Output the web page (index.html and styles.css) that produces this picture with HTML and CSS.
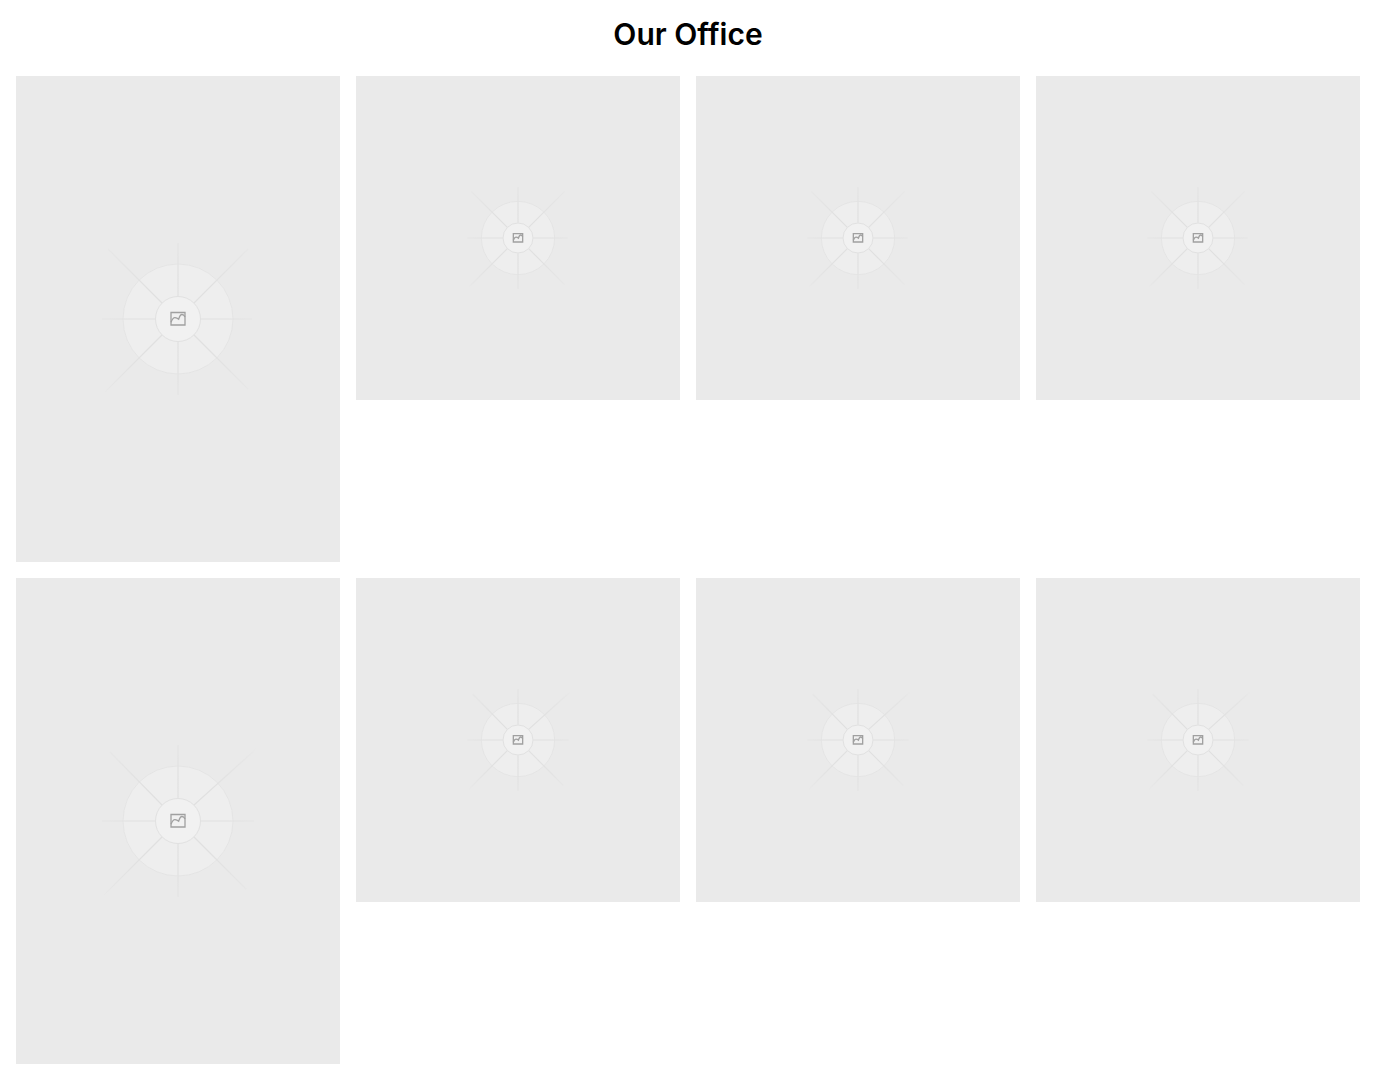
FILE: index.html
```html
<!DOCTYPE html>
<html lang="en">
<head>
<meta charset="utf-8">
<title>Our Office</title>
<link rel="stylesheet" href="styles.css">
</head>
<body>
<svg class="defs" width="0" height="0" aria-hidden="true">
  <defs>
    <radialGradient id="ray" gradientUnits="userSpaceOnUse" cx="90" cy="90" r="108">
      <stop offset="0.4" stop-color="#e0e0e0"/>
      <stop offset="0.6" stop-color="#e2e2e2"/>
      <stop offset="0.88" stop-color="#e6e6e6"/>
      <stop offset="1" stop-color="#eaeaea"/>
    </radialGradient>
    <symbol id="ph-a" viewBox="0 0 180 180">
      <circle class="outer" cx="90" cy="90" r="55"/>
      <g class="rays">
        <path d="M90 14V67M90 113V166M14 90H67M113 90H164"/>
        <path d="M20 20L74 74M160 20L106 74M106 106L160 160M74 106L17 163"/>
      </g>
      <circle class="inner" cx="90" cy="90" r="22.500"/>
      <g class="pic">
        <rect x="83" y="83.500" width="14" height="12.500"/>
        <path d="M83 93.300Q85 88.500 87 88.700T90.700 90.200Q92 85.500 94 85.500T97 88"/>
      </g>
    </symbol>
    <symbol id="ph-b" viewBox="0 0 180 180">
      <circle class="outer" cx="90" cy="90" r="55"/>
      <g class="rays">
        <path d="M90 14V67M90 113V166M14 90H67M113 90H166"/>
        <path d="M22 21L74 74M168 18L106 74M106 106L158 158M74 106L16 164"/>
      </g>
      <circle class="inner" cx="90" cy="90" r="22.500"/>
      <g class="pic">
        <rect x="83" y="83.500" width="14" height="12.500"/>
        <path d="M83 93.300Q85 88.500 87 88.700T90.700 90.200Q92 85.500 94 85.500T97 88"/>
      </g>
    </symbol>
  </defs>
</svg>
<main class="page">
  <h1 class="title">Our Office</h1>
  <section class="gallery">
    <div class="tile tile-tall"><svg class="ph ph-lg"><use href="#ph-a"/></svg></div>
    <div class="tile"><svg class="ph ph-sm"><use href="#ph-a"/></svg></div>
    <div class="tile"><svg class="ph ph-sm"><use href="#ph-a"/></svg></div>
    <div class="tile"><svg class="ph ph-sm"><use href="#ph-a"/></svg></div>
    <div class="tile tile-tall"><svg class="ph ph-lg"><use href="#ph-b"/></svg></div>
    <div class="tile"><svg class="ph ph-sm"><use href="#ph-b"/></svg></div>
    <div class="tile"><svg class="ph ph-sm"><use href="#ph-b"/></svg></div>
    <div class="tile"><svg class="ph ph-sm"><use href="#ph-b"/></svg></div>
  </section>
</main>
</body>
</html>
```
FILE: styles.css
```css
* { box-sizing: border-box; }
html, body { margin: 0; background: #fff; }
body { font-family: Inter, "Liberation Sans", sans-serif; color: #000; }
.defs { position: absolute; }
.page { padding: 16px; }
.title {
  margin: 0 0 24px;
  font-size: 30px;
  line-height: 36px;
  font-weight: 600;
  text-align: center;
}
.gallery {
  display: grid;
  grid-template-columns: repeat(4, 324px);
  gap: 16px;
  align-items: start;
}
.tile {
  height: 324px;
  background: #eaeaea;
  display: flex;
  align-items: center;
  justify-content: center;
}
.tile-tall { height: 486px; }
.ph { display: block; filter: blur(0.3px); }
.ph-lg { width: 180px; height: 180px; }
.ph-sm { width: 120px; height: 120px; }
.outer { fill: #eeeeee; stroke: #e4e4e4; stroke-width: 1; vector-effect: non-scaling-stroke; }
.rays { fill: none; stroke: url(#ray); stroke-width: 1.2; }
.rays path { vector-effect: non-scaling-stroke; }
.inner { fill: #f1f1f1; stroke: #e1e1e1; stroke-width: 1; vector-effect: non-scaling-stroke; }
.pic { fill: none; stroke: #a0a0a0; stroke-width: 1.3; }
.pic rect, .pic path { vector-effect: non-scaling-stroke; }
```
